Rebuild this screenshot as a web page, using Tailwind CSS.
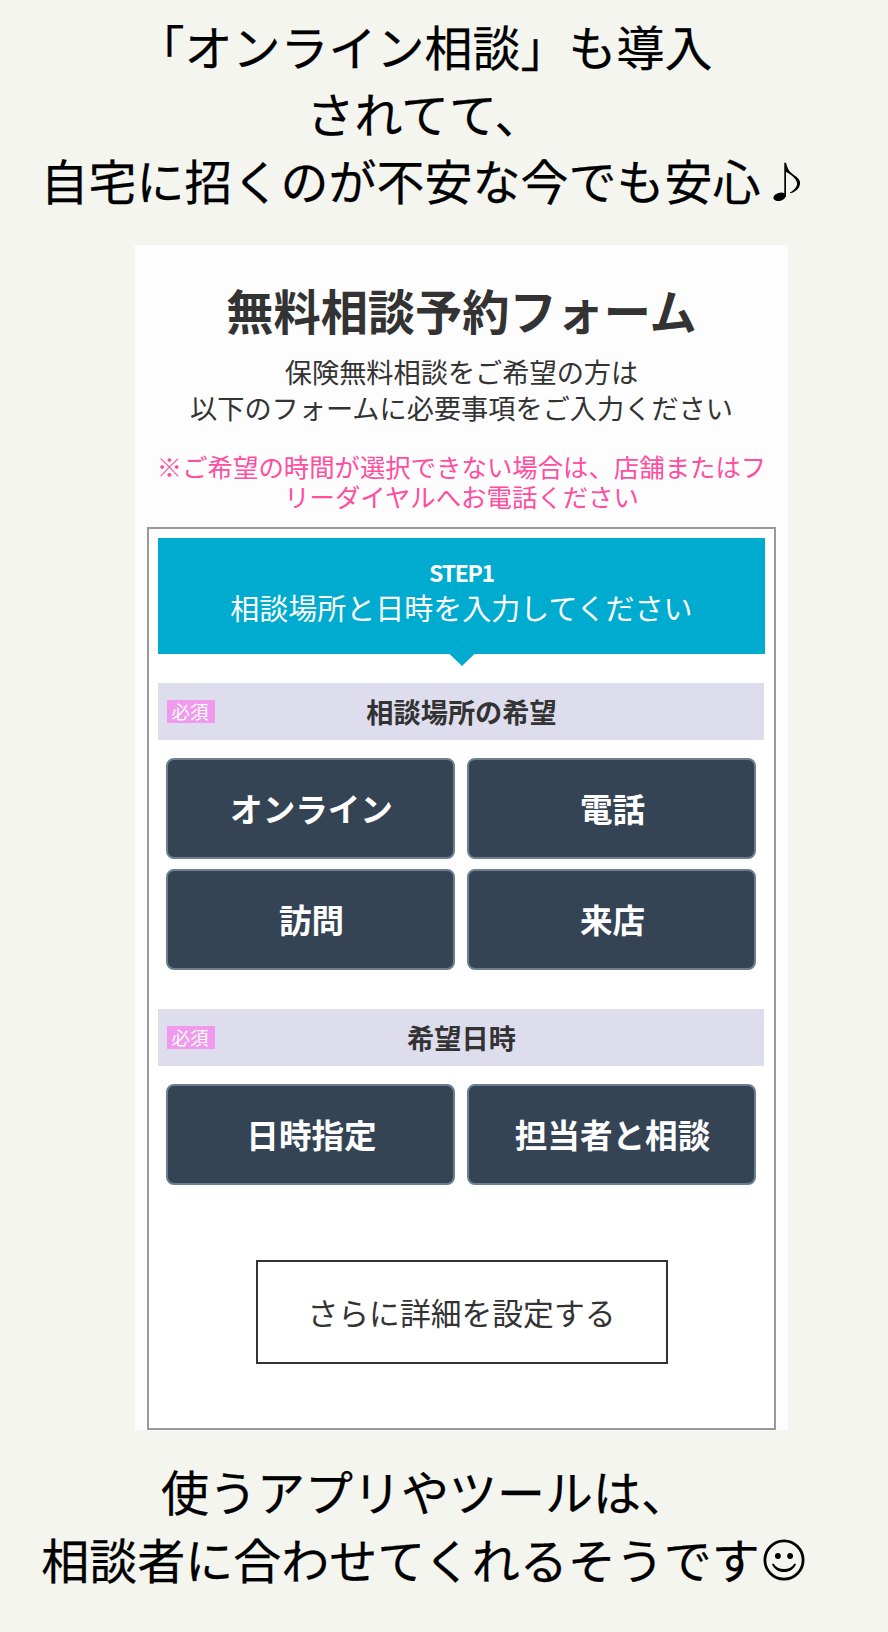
<!DOCTYPE html>
<html lang="ja">
<head>
  <meta charset="UTF-8" />
  <meta name="viewport" content="width=device-width, initial-scale=1" />
  <title>無料相談予約フォーム</title>
  <script src="https://cdn.jsdelivr.net/npm/@tailwindcss/browser@4"></script>
  <style>
    body {
      font-family: 'Noto Sans CJK JP', sans-serif;
      background: #f4f5ef;
    }
  </style>
</head>
<body class="w-[888px] h-[1632px] overflow-hidden">
  <!-- Intro -->
  <div class="w-[849px] h-[245px] pt-[12px] text-center text-[48px] leading-[67px] text-black whitespace-nowrap [-webkit-text-stroke:0.25px_#000]">
    <p>「オンライン相談」も導入</p>
    <p>されてて、</p>
    <p class="flex justify-center">
      <span>自宅に招くのが不安な今でも安心</span>
      <svg class="w-12 h-[67px]" viewBox="0 0 48 67" aria-label="♪">
        <path d="M23.300 16.700H25C26 21.500 28 25 30.700 27.300C34 30 37.300 31.800 38.400 34.200C40.500 38.500 37.500 45.500 29.200 47.200L28.900 46.500C34 43.500 36.600 40 36 36.700C35.300 33 30.500 28.500 25 26V51H23.300z" />
        <ellipse cx="18.600" cy="50.800" rx="6.400" ry="4" transform="rotate(-16 18.600 50.800)" />
      </svg>
    </p>
  </div>

  <!-- Reservation form -->
  <main class="ml-[135px] w-[653px] h-[1185px] bg-[#fdfdfd] pt-[34px] text-center text-[#333] whitespace-nowrap">
    <h1 class="h-[64px] text-[47.2px] leading-[62px] font-bold">無料相談予約フォーム</h1>
    <p class="mt-[11px] text-[27.2px] leading-[35.5px]">保険無料相談をご希望の方は<br />以下のフォームに必要事項をご入力ください</p>
    <p class="mt-[26px] text-[25.4px] leading-[30px] text-[#ff4da0]">※ご希望の時間が選択できない場合は、店舗またはフ<br />リーダイヤルへお電話ください</p>

    <div class="ml-[12px] mt-[16px] w-[629px] h-[903px] border-2 border-[#999] bg-white px-[9px] pt-[9px]">
      <div class="relative h-[115.5px] bg-[#00abd0] pt-[18px] text-white">
        <p class="text-[23px] leading-[32px] font-bold tracking-[-1.3px]">STEP1</p>
        <p class="text-[29px] leading-[38px]">相談場所と日時を入力してください</p>
        <svg class="absolute left-[290.5px] top-[115px] w-[26px] h-[14px]" viewBox="0 0 26 14"><path d="M0 0h26v.5L13 13 0 .5z" fill="#00abd0" /></svg>
      </div>

      <section class="mt-[29px]">
        <div class="relative w-[606px] h-[57px] bg-[#dedded]">
          <span class="absolute left-[9px] top-[17px] w-12 h-[23.500px] bg-[#f09aee] pr-[2px] text-[18.5px] leading-[22px] text-white">必須</span>
          <h2 class="pl-px text-[27.2px] leading-[57px] font-bold">相談場所の希望</h2>
        </div>
        <div class="mt-[18.5px] ml-2 grid grid-cols-[289px_289px] gap-x-[12px] gap-y-[10px] text-[32.6px] leading-[93px] font-bold text-white">
          <button class="h-[101px] rounded-lg border-2 border-[#6c7f91] bg-[#344454] pl-[2px] pb-[2px]">オンライン</button>
          <button class="h-[101px] rounded-lg border-2 border-[#6c7f91] bg-[#344454] pl-[2px] pb-[2px]">電話</button>
          <button class="h-[101px] rounded-lg border-2 border-[#6c7f91] bg-[#344454] pl-[2px] pb-[2px]">訪問</button>
          <button class="h-[101px] rounded-lg border-2 border-[#6c7f91] bg-[#344454] pl-[2px] pb-[2px]">来店</button>
        </div>
      </section>

      <section class="mt-[38.5px]">
        <div class="relative w-[606px] h-[57px] bg-[#dedded]">
          <span class="absolute left-[9px] top-[17px] w-12 h-[23.500px] bg-[#f09aee] pr-[2px] text-[18.5px] leading-[22px] text-white">必須</span>
          <h2 class="pl-px text-[27.2px] leading-[57px] font-bold">希望日時</h2>
        </div>
        <div class="mt-[18.5px] ml-2 grid grid-cols-[289px_289px] gap-x-[12px] text-[32.6px] leading-[93px] font-bold text-white">
          <button class="h-[101px] rounded-lg border-2 border-[#6c7f91] bg-[#344454] pl-[2px] pb-[2px]">日時指定</button>
          <button class="h-[101px] rounded-lg border-2 border-[#6c7f91] bg-[#344454] pl-[2px] pb-[2px]">担当者と相談</button>
        </div>
      </section>

      <button class="mt-[75px] w-[412px] h-[104px] border-2 border-[#333] bg-white text-[30.800px]">さらに詳細を設定する</button>
    </div>
  </main>

  <!-- Closing note -->
  <div class="w-[849px] pt-[27px] text-center text-[48px] leading-[67.500px] text-black whitespace-nowrap">
    <p class="pl-px [-webkit-text-stroke:0.25px_#000]">使うアプリやツールは、</p>
    <p class="flex justify-center">
      <span class="[-webkit-text-stroke:0.25px_#000]">相談者に合わせてくれるそうです</span>
      <svg class="w-12 h-[67px]" viewBox="0 0 48 67" aria-label="☺">
        <circle cx="24" cy="35" r="19.100" fill="none" stroke="#000" stroke-width="2.800" />
        <circle cx="17.900" cy="31" r="2.900" />
        <circle cx="30.100" cy="31" r="2.900" />
        <path d="M12 39.200C14 44 18.500 47.100 24 47.100S34 44 36 39.200L34.500 38.500C32.300 42.200 28.500 44.100 24 44.100S15.700 42.200 13.500 38.500z" />
      </svg>
    </p>
  </div>
</body>
</html>
